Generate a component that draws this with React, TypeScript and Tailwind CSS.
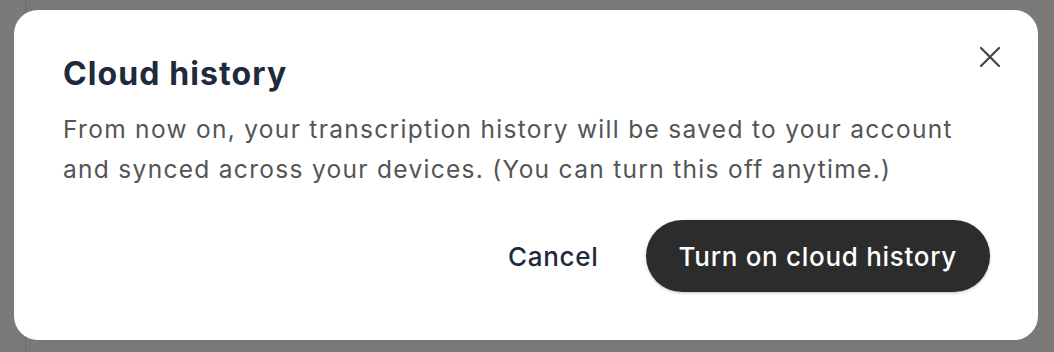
export default function App() {
  return (
    <div className="relative h-[352px] w-[1054px] overflow-hidden bg-[#7a7a78] font-['Inter',sans-serif]">
      <div className="absolute inset-y-0 left-[25px] right-0 border-l border-[#6c6c6a] bg-[#797977]" />

      <div className="absolute left-[14px] top-[10px] flex h-[330px] w-[1024px] flex-col rounded-[24px] bg-white pl-[49px] pr-[48px]">
        <button className="absolute right-[28px] top-[27px] flex h-[40px] w-[40px] items-center justify-center text-[#444]">
          <svg width="20" height="20" viewBox="0 0 20 20" fill="none" stroke="currentColor" strokeWidth="2.2" strokeLinecap="round">
            <path d="M1 1 L19 19 M19 1 L1 19" />
          </svg>
        </button>

        <h2 className="mt-[44px] text-[32px] font-bold leading-[40px] tracking-[1.1px] text-[#1e2b3c]">
          Cloud history
        </h2>
        <p className="mt-[15px] w-[915px] text-[24.5px] leading-[40px] tracking-[1.3px] text-[#555555]">
          From now on, your transcription history will be saved to your account and synced across your devices. (You can turn this off anytime.)
        </p>

        <div className="mt-auto mb-[48px] flex items-center justify-end gap-[47px]">
          <button className="text-[26px] font-medium tracking-[0.7px] text-[#1e2b3c]">Cancel</button>
          <button className="h-[72px] rounded-full bg-[#2c2c2c] px-[33px] text-[26px] font-medium tracking-[0.7px] text-white shadow-[0_1px_3px_rgba(0,0,0,0.25)]">
            Turn on cloud history
          </button>
        </div>
      </div>
    </div>
  );
}
